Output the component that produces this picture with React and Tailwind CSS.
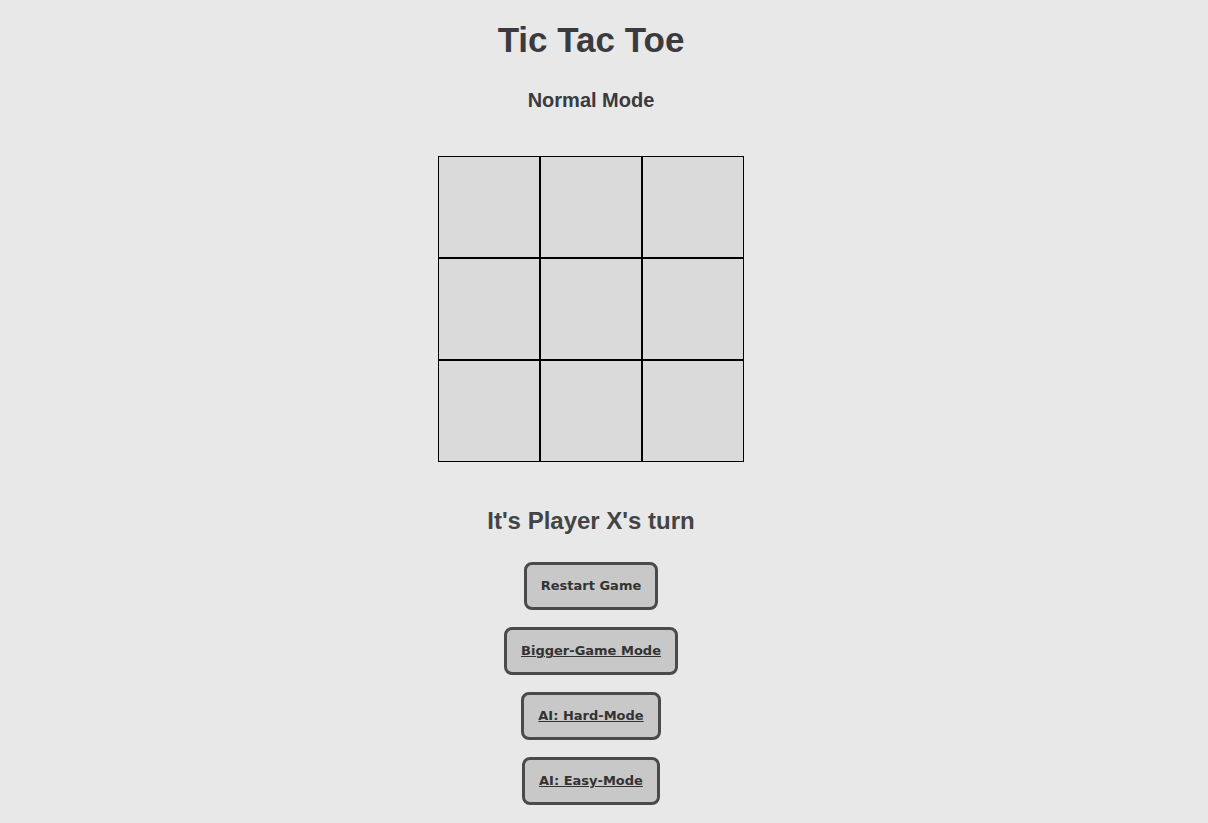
export default function App() {
  const cells = Array.from({ length: 9 });
  const buttons = [
    { label: "Restart Game", underline: false },
    { label: "Bigger-Game Mode", underline: true },
    { label: "AI: Hard-Mode", underline: true },
    { label: "AI: Easy-Mode", underline: true },
  ];
  return (
    <div className="min-h-[823px] bg-[#e8e8e8] flex flex-col items-center pt-[20px] pr-[26px] font-['Liberation_Sans',Arial,sans-serif] text-[#3a3a3f]">
      <h1 className="text-[35px] leading-[40px] font-bold">Tic Tac Toe</h1>
      <h3 className="mt-[28px] text-[20px] leading-[24px] font-bold">Normal Mode</h3>
      <div className="mt-[44px] grid grid-cols-[repeat(3,102px)]">
        {cells.map((_, i) => (
          <div key={i} className="w-[102px] h-[102px] border border-black bg-[#dadada]" />
        ))}
      </div>
      <h2 className="mt-[45px] text-[24px] leading-[28px] font-bold text-[#444]">It's Player X's turn</h2>
      <div className="mt-[27px] flex flex-col items-center gap-[17px]">
        {buttons.map((b) => (
          <button
            key={b.label}
            className={`h-[48px] px-[14px] border-[3px] border-[#4a4a4a] rounded-[8px] bg-[#c8c8c8] text-[#333] text-[13px] font-bold font-['DejaVu_Sans',Verdana,sans-serif] ${b.underline ? "underline" : ""}`}
          >
            {b.label}
          </button>
        ))}
      </div>
    </div>
  );
}
